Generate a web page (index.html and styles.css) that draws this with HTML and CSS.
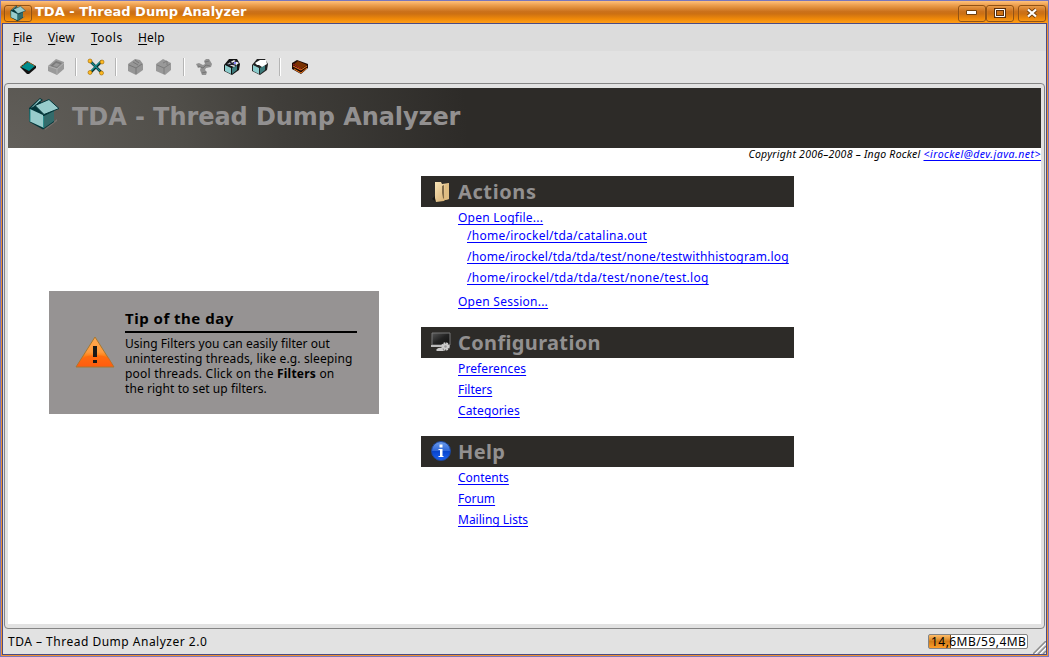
FILE: index.html
```html
<!DOCTYPE html>
<html lang="en">
<head>
<meta charset="utf-8">
<title>TDA - Thread Dump Analyzer</title>
<link rel="stylesheet" href="styles.css">
</head>
<body>
<svg class="defs" width="0" height="0" aria-hidden="true">
  <defs>
    <linearGradient id="warn" x1="0" y1="0" x2="0" y2="1"><stop offset="0" stop-color="#ffa850"/><stop offset=".5" stop-color="#ff9a3c"/><stop offset=".65" stop-color="#ff7a10"/><stop offset="1" stop-color="#ff5a10"/></linearGradient>
    <linearGradient id="folder" x1="0" y1="0" x2="1" y2="1"><stop offset="0" stop-color="#f8e4b8"/><stop offset="1" stop-color="#d2a868"/></linearGradient>
    <linearGradient id="info" x1="0" y1="0" x2="0" y2="1"><stop offset="0" stop-color="#6c9cec"/><stop offset=".5" stop-color="#2e66d8"/><stop offset=".52" stop-color="#0844cc"/><stop offset="1" stop-color="#1c62f0"/></linearGradient>
    <linearGradient id="screen" x1="0" y1="0" x2="1" y2="1"><stop offset="0" stop-color="#555"/><stop offset=".5" stop-color="#222"/><stop offset="1" stop-color="#111"/></linearGradient>
    <symbol id="cube" viewBox="0 0 32 34">
      <path d="M17 32l12-10v2L17 33z" fill="#77716d"/>
      <path d="M1 11L12 1l3 2-7 5 18 6v11l-11 7.500L1.500 25z" fill="#04363a"/>
      <path d="M2 12l13 6v12.500L2 24.500z" fill="#98cccc"/><path d="M16 19l10-5v10l-10 7z" fill="#336b6b"/>
      <path d="M3 11l9-9 1 1-6 6z" fill="#98cccc"/><path d="M4 11l8-7 2 3-6 5z" fill="#04363a"/>
      <path d="M7 8.500L21 2.500l10 9-15 6z" fill="#98cccc" stroke="#04363a"/>
      <path d="M2 12v12.500M15.500 19v12" fill="none" stroke="#2a8c8c"/>
    </symbol>
  </defs>
</svg>
<div class="window">
  <header class="titlebar">
    <span class="wbtn app"><svg width="18" height="17"><use href="#cube"/></svg></span>
    <h1>TDA - Thread Dump Analyzer</h1>
    <span class="wbtn"><svg width="12" height="8"><path d="M.5 1.500h10v4h-10z" fill="#fff" stroke="#70400e"/></svg></span>
    <span class="wbtn"><svg width="12" height="10"><path d="M1.500 1.500h9v7h-9z" fill="none" stroke="#5c300c" stroke-width="3"/><path d="M1.500 1.500h9v7h-9z" fill="none" stroke="#fff"/></svg></span>
    <span class="wbtn close"><svg width="12" height="10"><path d="M2 1.500l8 7M10 1.500l-8 7" stroke="#70400e" stroke-width="4"/><path d="M2 1.500l8 7M10 1.500l-8 7" stroke="#fff" stroke-width="2.300"/></svg></span>
  </header>
  <nav class="menubar">
    <span class="m1"><u>F</u>ile</span><span class="m2"><u>V</u>iew</span><span class="m3"><u>T</u>ools</span><span class="m4"><u>H</u>elp</span>
  </nav>
  <div class="toolbar">
    <svg width="18" height="18" viewBox="0 0 18 18"><path d="M1 9l7-6 9 5v2l-7 6-2 0z" fill="#111"/><path d="M2 9l7-5 7 4-6 5z" fill="#008c8c"/><path d="M1.500 9l7-5.500L16 8" fill="none" stroke="#b87020" stroke-dasharray="2 1"/></svg>
    <svg width="18" height="18" viewBox="0 0 18 18"><path d="M1 8l8-7 8 3v7l-7 6-9-4z" fill="#9a9a9a"/><path d="M3 8l6-5 6 2-5 5z" fill="#7a7a7a"/><path d="M6 8l3-3 4 1-3 3z" fill="#999"/><path d="M1 8l9 3 7-6M10 11v5" fill="none" stroke="#b0b0b0"/></svg>
    <i class="sep"></i>
    <svg width="18" height="18" viewBox="0 0 18 18"><path d="M3 3l12 12M15 3L3 15" stroke="#082c2c" stroke-width="2.500"/><path d="M3 3l10 10M14 3L4 13" stroke="#168c8c" stroke-width="1.300"/><g fill="#ffba22" stroke="#9b6500" stroke-width=".6"><circle cx="3" cy="3" r="2"/><circle cx="15" cy="4" r="2"/><circle cx="3" cy="14.500" r="2"/><circle cx="14.500" cy="15" r="2"/></g></svg>
    <i class="sep"></i>
    <svg width="18" height="18" viewBox="0 0 18 18"><path d="M1 6l7-5 5 1 3 4v6l-7 5-8-4z" fill="#969696"/><path d="M2 7l7 3 6-4M9 10v6M6 4l5 3M8 2l4 3" fill="none" stroke="#777"/></svg>
    <svg width="18" height="18" viewBox="0 0 18 18"><path d="M1 6l7-5 8 4v7l-6 5-9-4z" fill="#999"/><path d="M2 7l7 3 6-4M9 10v6M8 5l4-2v4" fill="none" stroke="#7c7c7c"/></svg>
    <i class="sep"></i>
    <svg width="18" height="18" viewBox="0 0 18 18"><path d="M1 6l3-1 4 2 2-1-1-3 2-2h3l3 5-1 3-5 1-1 2 2 2-1 3-4 0-2-5 1-3-3 1z" fill="#929292"/><path d="M3 8l5 2 3-3 4 1M10 4l4-1M7 15l4-1" fill="none" stroke="#757575"/></svg>
    <svg width="18" height="18" viewBox="0 0 18 18"><path d="M1 7l5-6h8l3 5-1 6-7 5-8-4z" fill="#111"/><path d="M2 7l6 3v6l-6-3z" fill="#8ccccc"/><path d="M9 10l5-3v5l-5 4z" fill="#3e7c7c"/><path d="M4 6l7-4 5 3-5 4z" fill="#eee"/><path d="M4 6l9 1M7 4l6 4M6 7l8-4" stroke="#223" stroke-width="1.200"/><path d="M11 4h2v2h-2z" fill="#88f"/></svg>
    <svg width="18" height="18" viewBox="0 0 18 18"><path d="M1 7l5-6h8l3 5-1 6-7 5-8-4z" fill="#222"/><path d="M2 7l6 3v6l-6-3z" fill="#8ccccc"/><path d="M9 10l5-3v5l-5 4z" fill="#3e7c7c"/><path d="M4 5l5-3 6 0 1 4-5 3-3-2-2 0z" fill="#fff"/></svg>
    <i class="sep"></i>
    <svg width="18" height="18" viewBox="0 0 18 18"><path d="M1 5l5-3 11 4v4l-7 6-9-5z" fill="#210b05"/><path d="M3 6l4-3 9 4-6 4z" fill="#7b3100"/><path d="M2 8l8 4 6-4M3 11l7 4 6-5" fill="none" stroke="#f27818"/><path d="M2 6l8 5" stroke="#b02020"/></svg>
  </div>
  <main class="frame">
    <div class="page">
      <div class="banner"><svg width="32" height="34"><use href="#cube"/></svg><h2>TDA - Thread Dump Analyzer</h2></div>
      <p class="copyright"><span>Copyright 2006–2008 – Ingo Rockel</span> <a>&lt;irockel@dev.java.net&gt;</a></p>
      <div class="columns">
        <aside class="tip">
          <svg width="40" height="32" viewBox="0 0 40 32"><path d="M20 1L39 31H1z" fill="url(#warn)" stroke="#a67830" stroke-linejoin="round"/><path d="M7 22q14-6 27 0l4 8H2z" fill="#ff5d0d" opacity=".5"/><path d="M18 10h4v11h-4zM18 24h4v3h-4z" fill="#181818"/></svg>
          <div class="tiptext">
            <h3>Tip of the day</h3>
            <p><span class="t1">Using Filters you can easily filter out</span><span class="t2">uninteresting threads, like e.g. sleeping</span><span class="t3">pool threads. Click on the <b>Filters</b> on</span><span class="t4">the right to set up filters.</span></p>
          </div>
        </aside>
        <div class="sections">
          <section class="actions">
            <h3><svg width="20" height="22" viewBox="0 0 20 22"><path d="M1 18l5-5v8z" fill="#161512"/><path d="M4 1l6 0 1 2 7-1v16l-4 1-1 1-8 1-1-4z" fill="url(#folder)"/><path d="M11 5l2-1v14l-1-1-1-5z" fill="#806a48"/><path d="M14 4l4-2v16l-4 1z" fill="#dfbd82"/></svg><span>Actions</span></h3>
            <a class="l1">Open Logfile...</a>
            <a class="sub l2">/home/irockel/tda/catalina.out</a>
            <a class="sub l3">/home/irockel/tda/tda/test/none/testwithhistogram.log</a>
            <a class="sub l4">/home/irockel/tda/tda/test/none/test.log</a>
            <a class="l5">Open Session...</a>
          </section>
          <section class="config">
            <h3><svg width="20" height="20" viewBox="0 0 20 20"><path d="M1 1h18v12H1z" fill="url(#screen)" stroke="#777"/><path d="M0 13h17v2H0z" fill="#bbb"/><path d="M5 18q2-3 6-2l2 3H6z" fill="#ccc"/><circle cx="14.500" cy="14.500" r="3" fill="#ccc" stroke="#ccc" stroke-width="2.500" stroke-dasharray="1.600 .8"/><circle cx="14.500" cy="14.500" r="1.200" fill="#999"/></svg><span>Configuration</span></h3>
            <a class="l6">Preferences</a>
            <a class="l7">Filters</a>
            <a class="l8">Categories</a>
          </section>
          <section class="help">
            <h3><svg width="20" height="20" viewBox="0 0 20 20"><circle cx="10" cy="10" r="9.500" fill="url(#info)" stroke="#1c469c"/><path d="M8.500 3.500h3v3h-3zM7.500 8h4v7h1v1h-5v-1h1.500v-6H7.500z" fill="#fff"/></svg><span>Help</span></h3>
            <a class="l9">Contents</a>
            <a class="l10">Forum</a>
            <a class="l11">Mailing Lists</a>
          </section>
        </div>
      </div>
    </div>
  </main>
  <footer class="status">
    <span class="label">TDA – Thread Dump Analyzer 2.0</span>
    <div class="memory"><span>14,6MB/59,4MB</span></div>
    <svg class="grip" width="13" height="13"><path d="M0 13L13 0M5 13l8-8M10 13l3-3" stroke="#8c8c8c" stroke-width="1.500"/><path d="M2 13L13 2M7 13l6-6" stroke="#fff"/></svg>
  </footer>
</div>
</body>
</html>
```
FILE: styles.css
```css
* { box-sizing: border-box; margin: 0; }
body { width: 1049px; height: 657px; overflow: hidden; background: #7b7bc4; font: 12px "Noto Sans", sans-serif; color: #000; }
.defs { position: absolute; }
svg { display: block; flex: none; }
.window { width: 1049px; height: 657px; border: 1px solid #7777bd; display: flex; flex-direction: column; background: #f09232; }
.titlebar { height: 22px; flex: none; display: flex; align-items: center; padding: 2px 2px 0 3px; background: linear-gradient(#ffc17b 0, #eda04f 18%, #cb711b 48%, #cc7013 58%, #f08a09 82%, #ff9d17 100%); }
.titlebar h1 { flex: 1; padding: 0 0 2px 3px; font: bold 13px/18px "DejaVu Sans", sans-serif; color: #fff; white-space: nowrap; }
.wbtn { width: 28px; height: 17px; border: 1px solid #925214; border-radius: 3px; display: flex; align-items: center; justify-content: center; box-shadow: inset 0 0 1px #ffb35a; }
.wbtn.close { margin-left: 4px; }
.menubar, .toolbar, .frame, .status { margin: 0 1px; border-left: 1px solid #4a4a84; border-right: 1px solid #4a4a84; }
.menubar { height: 28px; flex: none; border-top: 1px solid #4a4a84; background: #dcdcdc; display: flex; padding: 5px 0 0 10px; line-height: 18px; }
.menubar span { flex: none; white-space: nowrap; }
.menubar u { text-underline-offset: 2px; }
.m1 { width: 35px; }
.m2 { width: 43px; letter-spacing: .1px; }
.m3 { width: 47px; letter-spacing: .5px; }
.m4 { letter-spacing: .2px; }
.toolbar { height: 32px; flex: none; background: #e2e2e2; display: flex; align-items: center; gap: 10px; padding: 0 0 0 16px; }
.sep { width: 2px; height: 18px; background: #b5b5b5; border-right: 1px solid #fff; }
.frame { height: 546px; flex: none; background: #e2e2e2; padding: 0 1px; }
.page { height: 546px; border: solid #e2e2e2; border-width: 5px 4px; background: #fff; outline: 1px solid #858585; outline-offset: -1px; border-radius: 4px; }
.banner { height: 60px; background: radial-gradient(circle 500px at 0 100%, #625f5a 0, #504e49 35%, #403e3a 55%, #2d2b28 92%); display: flex; align-items: center; padding: 0 0 8px 20px; }
.banner h2 { margin-left: 12px; font: bold 24px/30px "DejaVu Sans", sans-serif; color: #929090; white-space: nowrap; padding-top: 5px; letter-spacing: -.07px; }
.copyright { height: 14px; text-align: right; font-size: 10.5px; line-height: 13px; font-style: italic; white-space: nowrap; letter-spacing: .25px; }
.copyright a { letter-spacing: .5px; }
a { color: #00f; text-decoration: underline; text-underline-offset: 2px; text-decoration-skip-ink: none; }
.columns { display: flex; padding: 14px 0 0 41px; }
.tip { width: 330px; height: 123px; margin-top: 115px; background: #969393; display: flex; padding: 18px 22px 0 26px; }
.tip > svg { margin-top: 27px; }
.tiptext { width: 232px; margin-left: 10px; flex: none; }
.tip h3 { font: bold 15px/18px "Noto Sans", sans-serif; height: 24px; border-bottom: 2px solid #000; white-space: nowrap; letter-spacing: .5px; }
.tip p { padding-top: 3px; line-height: 15px; }
.tip p span { display: block; white-space: nowrap; }
.t1 { letter-spacing: .05px; }
.t2 { letter-spacing: .13px; }
.t3 { letter-spacing: .22px; }
.t4 { letter-spacing: .07px; }
.sections { width: 373px; margin-left: 42px; }
section h3 { height: 31px; background: #2d2b28; color: #929090; display: flex; align-items: center; padding-left: 10px; gap: 7px; font: bold 20px/30px "Noto Sans", sans-serif; letter-spacing: .35px; }
.actions h3 { letter-spacing: .6px; }
section a { display: block; width: max-content; height: 21px; line-height: 21px; margin-left: 37px; white-space: nowrap; }
section a.sub { margin-left: 46px; }
.actions { height: 151px; }
.actions .l1 { height: 18px; letter-spacing: .23px; }
.l2 { letter-spacing: .26px; }
.l3 { letter-spacing: .18px; }
.l4 { letter-spacing: .29px; }
.actions .l5 { margin-top: 3px; letter-spacing: .25px; }
.l6, .l8 { letter-spacing: .12px; }
.config { height: 109px; }
.config h3 svg, .help h3 svg { margin-bottom: 2px; }
.status { height: 26px; flex: none; background: #e2e2e2; display: flex; align-items: center; padding-left: 5px; border-bottom: 1px solid #4a4a84; }
.label { flex: 1; white-space: nowrap; letter-spacing: .2px; letter-spacing: .5px; }
.memory { width: 100px; height: 15px; border: 1px solid #848484; border-radius: 2px; background: linear-gradient(90deg, #0000 21px, #844a10 21px, #844a10 22px, #fff 22px), linear-gradient(#ffbd69, #d27d19 50%, #ff9d28); line-height: 13px; white-space: nowrap; padding-left: 2px; letter-spacing: .45px; }
.grip { align-self: flex-end; margin-left: 5px; }
```
